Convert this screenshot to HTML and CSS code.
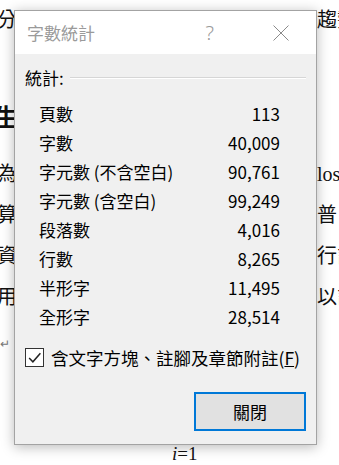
FILE: index.html
```html
<!DOCTYPE html>
<html lang="zh-Hant">
  <head>
    <meta charset="UTF-8" />
    <meta name="viewport" content="width=device-width, initial-scale=1.0" />
    <title>字數統計</title>
    <link rel="stylesheet" href="styles.css">
  </head>
  <body>
    <div class="doc">
      <div class="line line-top">
        <span class="left">分</span>
        <span class="right">趨勢</span>
      </div>
      <div class="line heading">
        <span class="left">生</span>
        <span class="right"></span>
      </div>
      <div class="para">
        <div class="line">
          <span class="left">為</span>
          <span class="right">loss</span>
        </div>
        <div class="line">
          <span class="left">算</span>
          <span class="right">普 *</span>
        </div>
        <div class="line">
          <span class="left">資</span>
          <span class="right">行計</span>
        </div>
        <div class="line">
          <span class="left">用</span>
          <span class="right">以計</span>
        </div>
      </div>
      <div class="line mark">
        <span class="left">↵</span>
        <span class="right"></span>
      </div>
      <div class="formula"><i>i</i>=1</div>
    </div>

    <div class="dialog">
      <div class="titlebar">
        <span class="title">字數統計</span>
        <span class="help">?</span>
        <svg class="close" width="16" height="16" viewBox="0 0 16 16">
          <path d="M0.5 0.5 L15.5 15.5 M15.5 0.5 L0.5 15.5" stroke="#8a8a8a" stroke-width="1" fill="none" />
        </svg>
      </div>

      <div class="dialog-body">
        <div class="group-label">
          <span>統計:</span>
          <div class="rule"></div>
        </div>

        <div id="stats" class="stats"></div>

        <label class="check">
          <span class="box">
            <svg width="15" height="15" viewBox="0 0 14 14">
              <path d="M2 7.5 L5.5 11 L12.5 3" stroke="#222" stroke-width="1.4" fill="none" />
            </svg>
          </span>
          <span>含文字方塊、註腳及章節附註(<u>F</u>)</span>
        </label>

        <div class="actions">
          <button class="btn">關閉</button>
        </div>
      </div>
    </div>

    <script>
      const statsData = [
        { label: "頁數", value: "113" },
        { label: "字數", value: "40,009" },
        { label: "字元數 (不含空白)", value: "90,761" },
        { label: "字元數 (含空白)", value: "99,249" },
        { label: "段落數", value: "4,016" },
        { label: "行數", value: "8,265" },
        { label: "半形字", value: "11,495" },
        { label: "全形字", value: "28,514" },
      ];

      function renderStats() {
        const container = document.getElementById("stats");
        container.innerHTML = "";

        statsData.forEach((item) => {
          const row = document.createElement("div");
          row.classList.add("stat-row");
          row.innerHTML = `
                    <span>${item.label}</span>
                    <span>${item.value}</span>
                `;
          container.appendChild(row);
        });
      }

      renderStats();
    </script>
  </body>
</html>
```

FILE: styles.css
```css
body {
  margin: 0;
  padding: 0;
  background-color: #ffffff;
  font-family: "Liberation Serif", "Noto Sans CJK TC", serif;
  overflow: hidden;
  width: 339px;
  height: 465px;
}

.doc {
  position: relative;
  color: #111;
  font-size: 20px;
}

.line {
  display: grid;
  grid-template-columns: 317px 22px;
  height: 41px;
  line-height: 41px;
  white-space: nowrap;
}

.line .left {
  overflow: hidden;
  margin-left: -3px;
}

.line .right {
  overflow: hidden;
}

.line-top {
  height: 40px;
  line-height: 40px;
}

.heading {
  margin-top: 58px;
  height: 40px;
  line-height: 40px;
  font-size: 24px;
  font-weight: bold;
}

.heading .left {
  margin-left: -6px;
}

.para {
  margin-top: 16px;
}

.mark {
  margin-top: 6px;
  font-size: 12px;
  color: #777;
}

.mark .left {
  margin-left: 0;
}

.formula {
  margin-top: 68px;
  height: 41px;
  line-height: 41px;
  padding-left: 172px;
  font-size: 19px;
}

.dialog {
  position: absolute;
  left: 14px;
  top: 10px;
  width: 301px;
  height: 433px;
  border: 1px solid #a3a3a3;
  background-color: #f0f0f0;
  box-shadow: 0 2px 12px rgba(0, 0, 0, 0.28);
  font-family: "Noto Sans CJK TC", sans-serif;
  color: #000;
  display: flex;
  flex-direction: column;
}

.titlebar {
  height: 43px;
  background-color: #ffffff;
  display: flex;
  align-items: center;
  padding-left: 12px;
}

.title {
  flex: 1;
  font-size: 17px;
  color: #9a9a9a;
}

.help {
  font-family: "Noto Sans", sans-serif;
  font-weight: 300;
  font-size: 20px;
  color: #9a9a9a;
  margin-right: 59px;
}

.close {
  margin-right: 27px;
}

.dialog-body {
  flex: 1;
  display: flex;
  flex-direction: column;
  padding: 13px 10px 0 10px;
}

.group-label {
  display: flex;
  align-items: center;
  height: 20px;
  font-size: 17px;
  gap: 6px;
}

.rule {
  flex: 1;
  height: 0;
  border-top: 1px solid #d6d6d6;
  border-bottom: 1px solid #ffffff;
  margin-top: 2px;
}

.stats {
  margin-top: 12px;
  padding-left: 14px;
  padding-right: 26px;
}

.stat-row {
  display: flex;
  justify-content: space-between;
  align-items: center;
  height: 29px;
  font-size: 17px;
}

.check {
  display: flex;
  align-items: center;
  gap: 7px;
  margin-top: 14px;
  height: 24px;
  font-size: 17.5px;
}

.box {
  width: 19px;
  height: 19px;
  border: 1px solid #333;
  background-color: #ffffff;
  display: flex;
  align-items: center;
  justify-content: center;
  box-sizing: border-box;
}

.actions {
  display: flex;
  justify-content: flex-end;
  margin-top: 23px;
}

.btn {
  width: 112px;
  height: 39px;
  border: 2px solid #0078d7;
  background-color: #e1e1e1;
  font-family: "Noto Sans CJK TC", sans-serif;
  font-size: 17px;
  color: #000;
  padding: 0;
}
```
